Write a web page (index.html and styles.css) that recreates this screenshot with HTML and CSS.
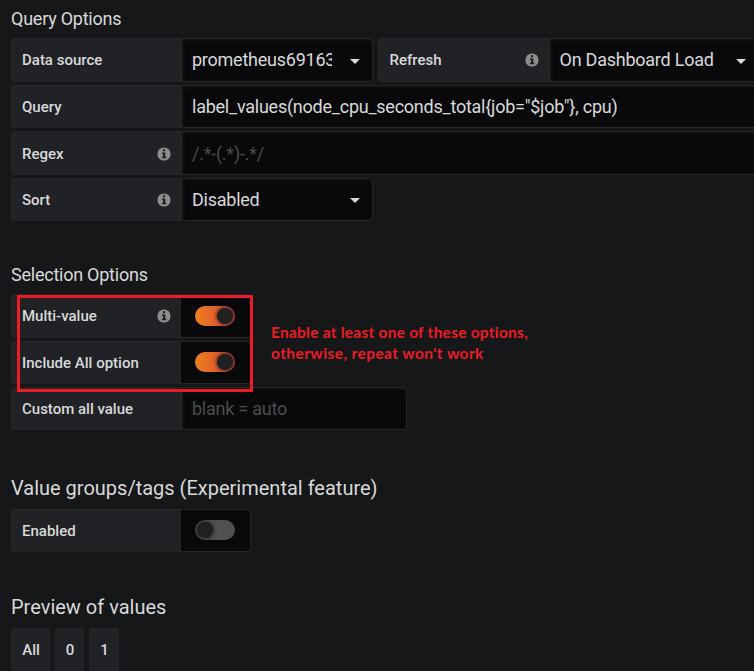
FILE: index.html
```
<!DOCTYPE html>
<html lang="en">
<head>
<meta charset="utf-8">
<title>Variable editor</title>
<link rel="stylesheet" href="styles.css">
</head>
<body>
<svg class="defs" width="0" height="0">
  <symbol id="info" viewBox="0 0 14 14">
    <circle cx="7" cy="7" r="6.6" fill="#8e8e8e"/>
    <path d="M5.9 2.3h2.3v2H5.9zM5 5.4h3.3v4.3h1v1.5H4.9V9.700h1.100V6.900H5z" fill="#212124"/>
  </symbol>
</svg>
<main class="page">
  <section class="group query">
    <h5>Query Options</h5>
    <div class="row">
      <div class="label">Data source</div>
      <div class="input select source"><span class="value">prometheus69163</span><i class="caret"></i></div>
      <div class="label refresh">Refresh<svg class="info"><use href="#info"/></svg></div>
      <div class="input select load"><span class="value">On Dashboard Load</span><i class="caret"></i></div>
    </div>
    <div class="row">
      <div class="label low">Query</div>
      <div class="input wide"><span class="value">label_values(node_cpu_seconds_total{job="$job"}, cpu)</span></div>
    </div>
    <div class="row">
      <div class="label low">Regex<svg class="info"><use href="#info"/></svg></div>
      <div class="input wide placeholder low"><span class="value">/.*-(.*)-.*/</span></div>
    </div>
    <div class="row">
      <div class="label low">Sort<svg class="info"><use href="#info"/></svg></div>
      <div class="input select source"><span class="value">Disabled</span><i class="caret"></i></div>
    </div>
  </section>

  <section class="group selection">
    <h5>Selection Options</h5>
    <div class="row">
      <div class="label switch-label">Multi-value<svg class="info"><use href="#info"/></svg></div>
      <div class="switch on"><span class="track"><i class="knob"></i></span></div>
    </div>
    <div class="row">
      <div class="label switch-label low">Include All option</div>
      <div class="switch on"><span class="track"><i class="knob"></i></span></div>
    </div>
    <div class="row last">
      <div class="label">Custom all value</div>
      <div class="input custom placeholder"><span class="value">blank = auto</span></div>
    </div>
    <div class="highlight"></div>
    <p class="note"><span class="line-one">Enable at least one of these options,</span><br><span class="line-two">otherwise, repeat won't work</span></p>
  </section>

  <section class="group tags">
    <h5 class="large">Value groups/tags (Experimental feature)</h5>
    <div class="row last">
      <div class="label switch-label">Enabled</div>
      <div class="switch"><span class="track"><i class="knob"></i></span></div>
    </div>
  </section>

  <section class="group preview">
    <h5 class="large">Preview of values</h5>
    <div class="row chips">
      <div class="chip all">All</div>
      <div class="chip">0</div>
      <div class="chip one">1</div>
    </div>
  </section>
</main>
</body>
</html>
```
FILE: styles.css
```
* { box-sizing: border-box; }
body {
  margin: 0;
  height: 671px;
  overflow: hidden;
  background: #161719;
  color: #d8d9da;
  font-family: Roboto, "Liberation Sans", sans-serif;
}
.defs { position: absolute; }
.page {
  height: 671px;
  padding-left: 11px;
  overflow: hidden;
}
.group {
  position: relative;
  display: flex;
  flex-direction: column;
  gap: 3px;
}
.query { height: 256px; }
.selection { height: 212px; }
.tags { height: 119px; padding-top: 3px; }
.preview { padding-top: 3px; }
h5 {
  flex: none;
  height: 35px;
  margin: 0;
  font-size: 18px;
  font-weight: 400;
  letter-spacing: -0.24px;
  line-height: 38px;
}
.query + .selection h5 { line-height: 37px; }
h5.large { font-size: 20px; letter-spacing: 0; line-height: 35px; }
.row {
  display: flex;
  flex: none;
  height: 43.5px;
}
.row.last { height: 43px; }
.label {
  display: flex;
  flex: none;
  align-items: center;
  justify-content: space-between;
  width: 170px;
  padding: 0 10px;
  border: 1px solid #262628;
  border-right: 0;
  border-radius: 3px 0 0 3px;
  background: #212226;
  font-size: 15px;
  font-weight: 500;
  white-space: nowrap;
}
.low { padding-top: 1.5px; }
.info { width: 14px; height: 14px; }
.input {
  display: flex;
  flex: none;
  align-items: center;
  padding-right: 9px;
  padding-left: 10px;
  border: 1px solid #262628;
  border-radius: 0 3px 3px 0;
  background: #09090b;
  box-shadow: inset 1px 1px 4px #161719;
  font-size: 18px;
  letter-spacing: -0.24px;
  white-space: nowrap;
}
.value { overflow: hidden; }
.source { width: 192px; }
.source .value { width: 140px; }
.source .caret { margin-left: 18px; }
.label.refresh { width: 171px; margin-left: 5px; padding-left: 10.5px; }
.load { width: 214px; padding-left: 9.5px; }
.load .value { width: 158px; }
.load .caret { margin-left: 18px; }
.caret {
  border-top: 5px solid #d8d9da;
  border-right: 5px solid transparent;
  border-left: 5px solid transparent;
  margin-top: 3px;
}
.wide { width: 600px; }
.placeholder { color: #4c4c4e; }
.custom { width: 226px; }
.switch {
  display: flex;
  align-items: center;
  width: 70px;
  padding-left: 14px;
  border: 1px solid #262628;
  border-left: 0;
  border-radius: 0 3px 3px 0;
  background: #09090b;
}
.track {
  display: flex;
  align-items: center;
  width: 40px;
  height: 20px;
  padding: 0 2px;
  border-radius: 10px;
  background: #505052;
}
.tags .track { margin-bottom: 1px; }
.on .track {
  justify-content: flex-end;
  background: linear-gradient(90deg, #ed801b, #df5b2e 60%, #bd3e3e);
}
.knob {
  width: 16px;
  height: 16px;
  border-radius: 50%;
  background: #212121;
  box-shadow: 0 0 4px #111;
}
.highlight {
  position: absolute;
  top: 39px;
  left: 6px;
  width: 236px;
  height: 97px;
  border: 3px solid #ed1c24;
}
.note {
  position: absolute;
  top: 66px;
  left: 260px;
  margin: 0;
  color: #ed1c24;
  font-family: Lato, "Open Sans", sans-serif;
  font-size: 15.5px;
  font-weight: 700;
  line-height: 21px;
  white-space: nowrap;
}
.line-one { letter-spacing: 0.24px; }
.line-two { letter-spacing: 0.4px; }
.chips { gap: 5px; }
.chip {
  display: flex;
  align-items: center;
  justify-content: center;
  width: 29px;
  border: 1px solid #262628;
  border-right: 0;
  border-radius: 3px 0 0 3px;
  background: #212226;
  font-size: 15px;
  font-weight: 500;
}
.chip.all { width: 39px; }
.chip.one { width: 30px; }
```
